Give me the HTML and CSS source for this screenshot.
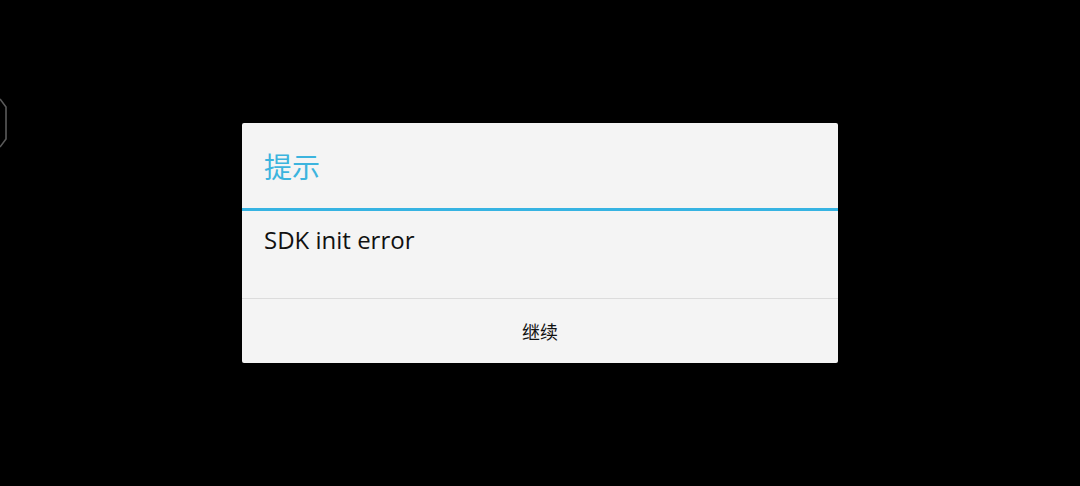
FILE: index.html
```html
<!DOCTYPE html>
<html lang="zh">
<head>
<meta charset="utf-8">
<link rel="stylesheet" href="styles.css">
</head>
<body>
<svg class="edge" width="10" height="50" viewBox="0 0 10 50"><path d="M0 1 L6 9 L6 41 L0 49" fill="none" stroke="#5a5a5a" stroke-width="1.6"/></svg>
<div class="dialog">
  <div class="title">提示</div>
  <div class="divider"></div>
  <div class="message">SDK init error</div>
  <div class="sep"></div>
  <div class="button">继续</div>
</div>
</body>
</html>
```
FILE: styles.css
```css
html, body { margin: 0; padding: 0; height: 100%; }
body {
  background: #000;
  display: flex;
  align-items: center;
  justify-content: center;
  font-family: "Open Sans", "Noto Sans CJK SC", sans-serif;
}
.edge { position: absolute; left: 0; top: 98px; }
.dialog {
  width: 596px;
  height: 240px;
  background: #f4f4f4;
  border-radius: 2px;
  display: flex;
  flex-direction: column;
}
.title {
  height: 85px;
  display: flex;
  align-items: center;
  padding-left: 22px;
  padding-top: 1px;
  box-sizing: border-box;
  color: #3cb4de;
  font-size: 28px;
  font-family: "Noto Sans CJK SC", sans-serif;
}
.divider { height: 3px; background: #36b3e2; }
.message {
  height: 87px;
  box-sizing: border-box;
  padding: 12px 0 0 22px;
  font-size: 24px;
  color: #111;
}
.sep { height: 1px; background: #dcdcdc; }
.button {
  flex: 1;
  display: flex;
  align-items: center;
  justify-content: center;
  font-size: 18px;
  color: #111;
  font-family: "Noto Sans CJK SC", sans-serif;
}
```
